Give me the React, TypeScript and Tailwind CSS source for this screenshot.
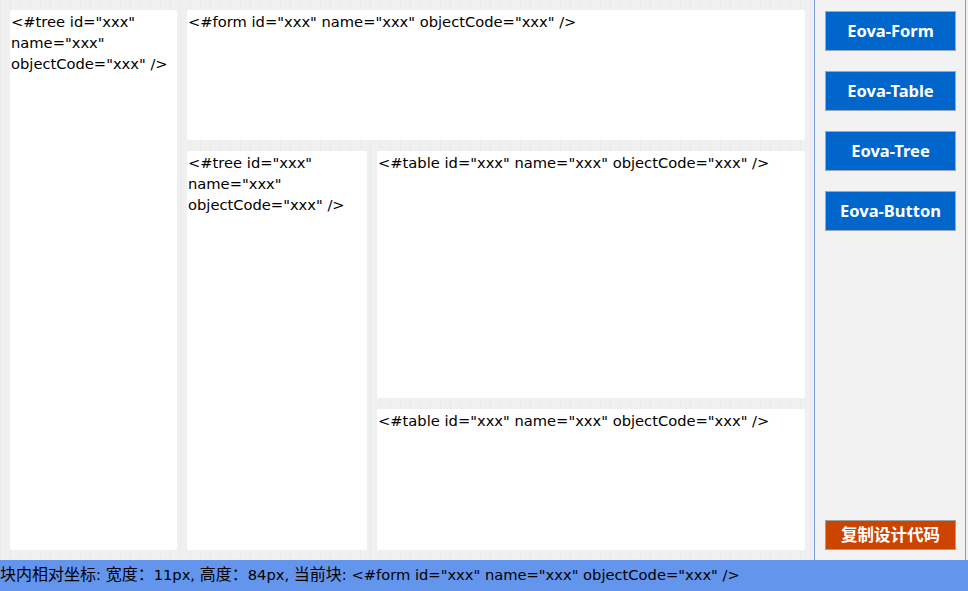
import React from "react";

const font = { fontFamily: '"DejaVu Sans", "Noto Sans CJK SC", sans-serif' };
const btnFont = { fontFamily: '"Noto Sans", "Noto Sans CJK SC", sans-serif' };

const Block: React.FC<{ className?: string; text: string }> = ({ className = "", text }) => (
  <div className={`bg-white rounded-[2px] px-[1px] pt-[1px] text-[14.7px] leading-[21px] text-black ${className}`}>
    {text}
  </div>
);

const ToolButton: React.FC<{ label: string }> = ({ label }) => (
  <button
    className="w-[131px] h-[40px] bg-[#0066cc] border border-[#9aa8b8] text-white font-bold text-[16.5px]"
    style={btnFont}
  >
    {label}
  </button>
);

const Cjk: React.FC<{ children: React.ReactNode }> = ({ children }) => (
  <span className="text-[16px]">{children}</span>
);

export default function App() {
  const tree = 'name="xxx"';
  return (
    <div className="w-[968px] h-[591px] flex flex-col bg-[#f0f0f0] overflow-hidden" style={font}>
      <div className="flex h-[560px]">
        <div className="w-[814px] flex gap-[10px] pl-[10px] pr-[9px] py-[10px] bg-[#f0f0f0] bg-[linear-gradient(90deg,#eaeaea_1px,transparent_1px)] bg-[size:10px_10px]">
          <Block className="w-[167px]" text={`<#tree id="xxx" ${tree} objectCode="xxx" />`} />
          <div className="flex-1 flex flex-col gap-[11px]">
            <Block className="h-[130px]" text={'<#form id="xxx" name="xxx" objectCode="xxx" />'} />
            <div className="flex-1 flex gap-[10px]">
              <Block className="w-[180px]" text={`<#tree id="xxx" ${tree} objectCode="xxx" />`} />
              <div className="flex-1 flex flex-col gap-[11px]">
                <Block className="h-[247px]" text={'<#table id="xxx" name="xxx" objectCode="xxx" />'} />
                <Block className="flex-1" text={'<#table id="xxx" name="xxx" objectCode="xxx" />'} />
              </div>
            </div>
          </div>
        </div>
        <div className="w-[152px] flex flex-col items-start border-x border-[#7d9fd6] bg-[#f2f2f2] pl-[10px] pt-[11px] pb-[10px]">
          <div className="flex flex-col gap-[20px]">
            <ToolButton label="Eova-Form" />
            <ToolButton label="Eova-Table" />
            <ToolButton label="Eova-Tree" />
            <ToolButton label="Eova-Button" />
          </div>
          <button
            className="mt-auto w-[131px] h-[30px] bg-[#cc4400] border border-[#a0a0a0] text-white font-bold text-[16.5px]"
            style={btnFont}
          >
            复制设计代码
          </button>
        </div>
      </div>
      <div className="h-[31px] mt-auto bg-[#6495ed] text-black text-[14.7px] leading-[30px] whitespace-nowrap">
        <Cjk>块内相对坐标</Cjk>: <Cjk>宽度：</Cjk>11px, <Cjk>高度：</Cjk>84px, <Cjk>当前块</Cjk>: &lt;#form id="xxx" name="xxx" objectCode="xxx" /&gt;
      </div>
    </div>
  );
}
